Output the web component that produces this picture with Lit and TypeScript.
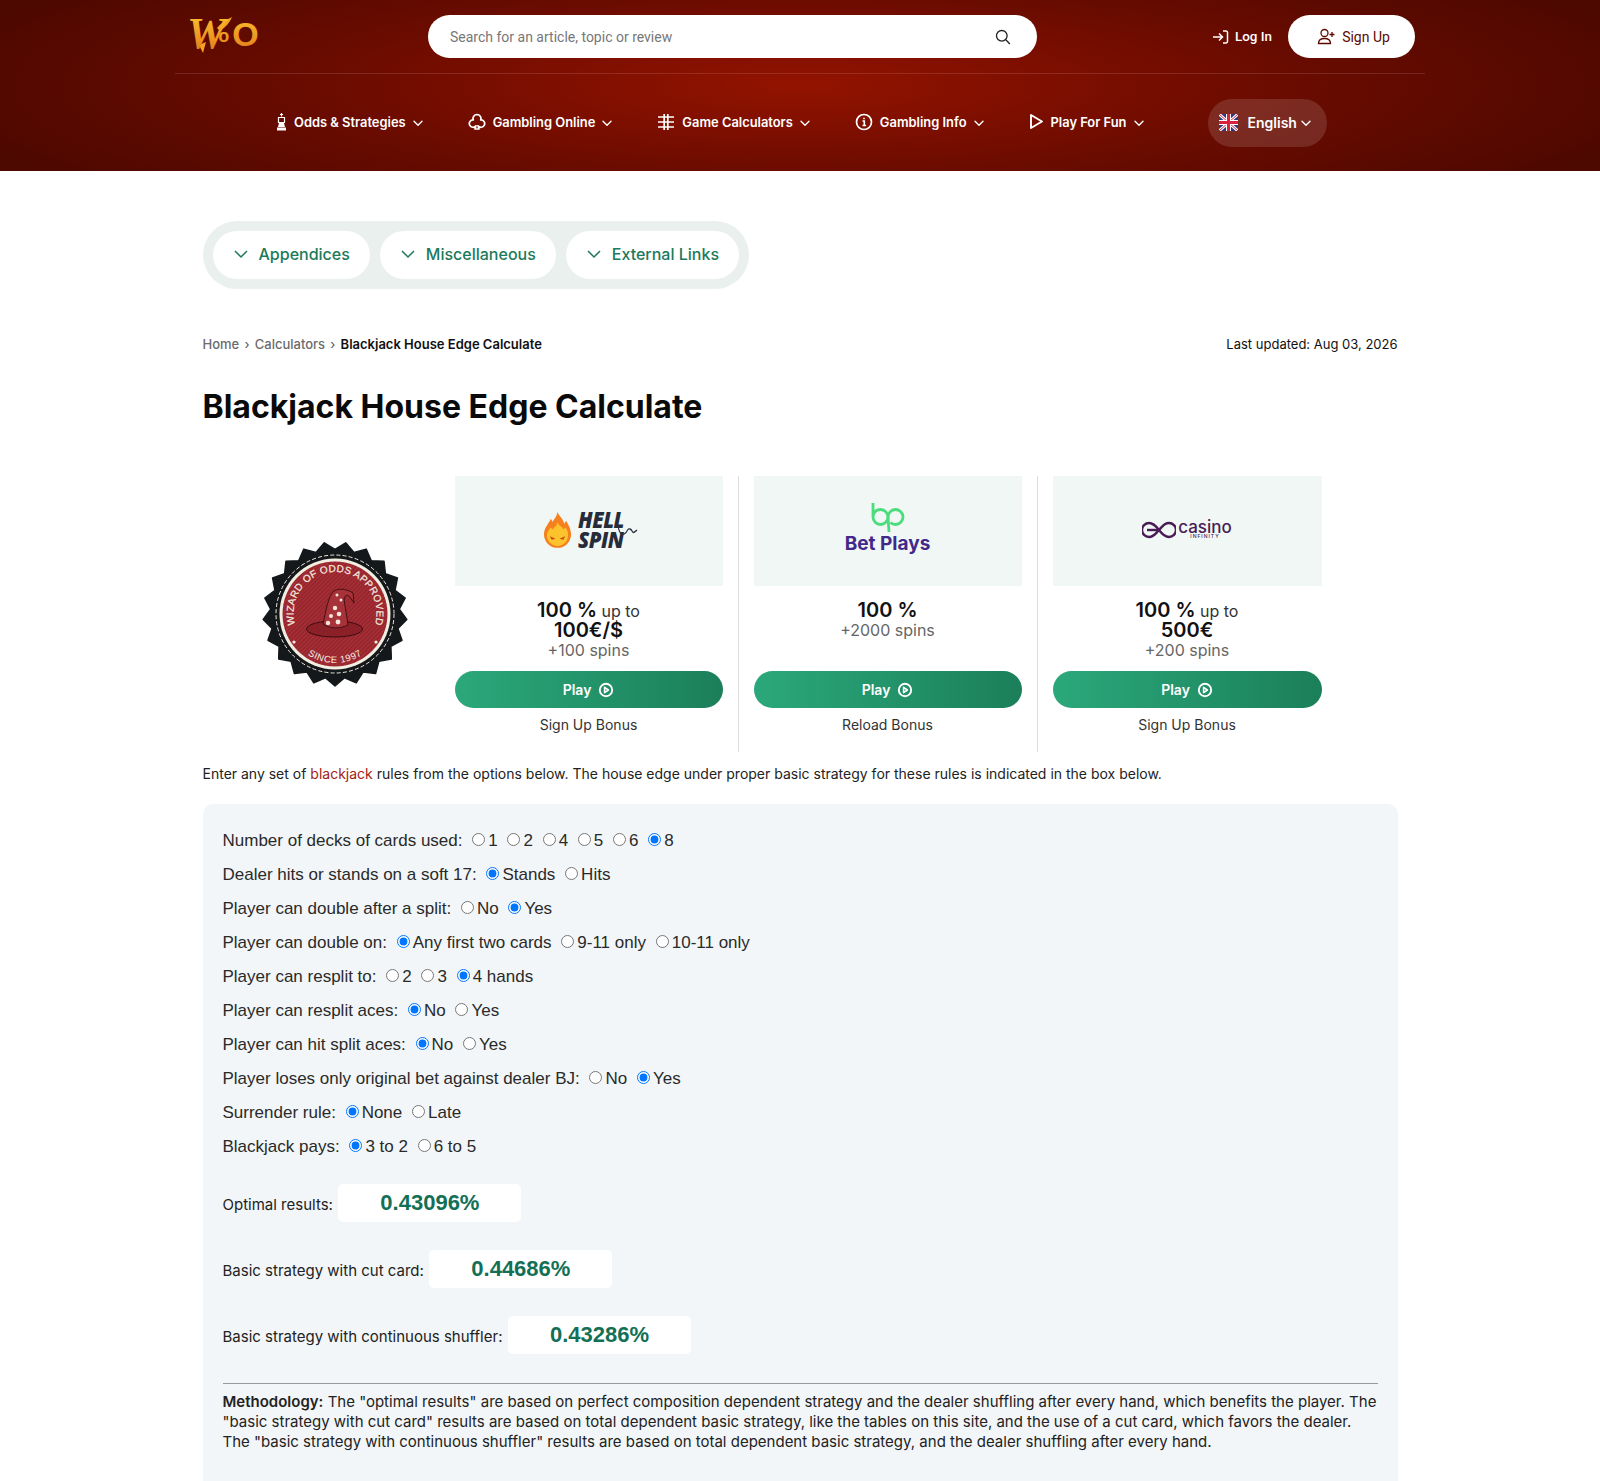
import { LitElement, html, css } from "lit";
import { customElement } from "lit/decorators.js";

const chev = html`<svg class="chev" viewBox="0 0 12 12" width="12" height="12"><path d="M2 4.2 6 8.2l4-4" fill="none" stroke="currentColor" stroke-width="1.4" stroke-linecap="round" stroke-linejoin="round"/></svg>`;
const playIcon = html`<svg viewBox="0 0 16 16" width="16" height="16"><circle cx="8" cy="8" r="6.2" fill="none" stroke="#fff" stroke-width="1.9"/><path d="M6.600 5.400 10.400 8l-3.800 2.600z" fill="none" stroke="#fff" stroke-width="1.600" stroke-linejoin="round"/></svg>`;

function burst() {
  const pts: string[] = [];
  const n = 21;
  for (let i = 0; i < n * 2; i++) {
    const r = i % 2 ? 64.5 : 72;
    const a = (Math.PI * i) / n - Math.PI / 2 + Math.PI / n;
    pts.push(`${(75 + r * Math.cos(a)).toFixed(1)},${(75 + r * Math.sin(a)).toFixed(1)}`);
  }
  return pts.join(" ");
}

const badge = html`<svg class="badge" viewBox="0 0 150 150" width="150" height="150">
  <defs>
    <path id="arcTop" d="M36.500 90A41.500 41.500 0 1 1 113.500 90"/>
    <path id="arcBot" d="M37 106A49 49 0 0 0 113 106"/>
    <pattern id="hatch" width="3" height="3" patternUnits="userSpaceOnUse" patternTransform="rotate(45)"><rect width="3" height="3" fill="#a52e36"/><rect width="1" height="3" fill="#8f2229"/></pattern>
  </defs>
  <polygon points="${burst()}" fill="#14181a" stroke="#14181a" stroke-width="1.500" stroke-linejoin="round"/>
  <circle cx="75" cy="75" r="59" fill="none" stroke="#efe9dc" stroke-width="1" stroke-dasharray="4 2.200"/>
  <circle cx="75" cy="75" r="55.500" fill="#f3eee2"/>
  <circle cx="75" cy="75" r="52.500" fill="url(#hatch)"/>
  <text font-family="'Liberation Sans',sans-serif" font-size="10" fill="#f5eee0" stroke="#f5eee0" stroke-width=".2" letter-spacing=".3"><textPath href="#arcTop" startOffset="50%" text-anchor="middle">WIZARD OF ODDS APPROVED</textPath></text>
  <text font-family="'Liberation Sans',sans-serif" font-size="9.400" fill="#f5eee0" letter-spacing=".6" text-anchor="middle"><textPath href="#arcBot" startOffset="50%">SINCE 1997</textPath></text>
  <circle cx="34" cy="103" r="1.600" fill="#f5eee0"/><circle cx="116" cy="103" r="1.600" fill="#f5eee0"/>
  <ellipse cx="74.500" cy="90" rx="28" ry="8" fill="#8b2028" stroke="#3a0c10" stroke-width="1"/>
  <path d="M63 85C66 72 68 57 74 52 79 49 87 50 93 54L94 64 90 58C88 56 85 55 84 60 85 68 87 78 88 86 80 90 70 90 63 85z" fill="#a8323a" stroke="#3a0c10" stroke-width=".9"/>
  <g fill="#f3e6dc"><circle cx="77" cy="56" r="1.500"/><circle cx="81" cy="61" r="1.500"/><circle cx="75" cy="69" r="2.200"/><circle cx="71" cy="77" r="2"/><circle cx="79" cy="75" r="2.300"/><circle cx="68" cy="84" r="2.200"/><circle cx="78" cy="83" r="2.400"/></g>
</svg>`;

const flame = html`<svg viewBox="0 0 30 38" width="29" height="37"><path d="M15 1c-1 5-3 7-5 10-1-1-1-2-2-3-1 4-7 9-7 16a14 14 0 0 0 28 0c0-6-3-10-5-14l-2 3c-1-5-5-7-7-12z" fill="#f4801f"/><path d="M15 11c0 4-3 5-5 8l-2-2c-2 3-4 5-4 8a11 11 0 0 0 22 0c0-3-1-6-3-8l-2 2c-1-3-5-4-6-8z" fill="#fdc32d"/><path d="M7 26l6 2.500-4 1zM23 26l-6 2.500 4 1z" fill="#c9470f"/></svg>`;

const hell = html`<div class="hell">${flame}<div class="hellt"><span>HELL</span><span>SPIN</span><svg class="tail" viewBox="0 0 20 12" width="20" height="12"><path d="M0 3c2 7 4 8 7 6s2-5 5-4 2 4 4 3l3-2" fill="none" stroke="#2a3040" stroke-width="1.200"/></svg></div></div>`;
const bet = html`<div class="bet"><svg viewBox="0 0 36 31" width="36" height="31"><path d="M3 1v14a7.500 7.500 0 1 0 7.500-7.500C5 7.500 3 12 3 15" fill="none" stroke="#4bdd7d" stroke-width="2.800"/><path d="M19 30 18 15A7.500 7.500 0 1 1 25.500 22.500c-2 0-3.500-.5-5-2" fill="none" stroke="#4bdd7d" stroke-width="2.800"/></svg><span>Bet Plays</span></div>`;
const inf = html`<div class="inf"><svg viewBox="0 0 34 18" width="34" height="18"><path d="M17 9c-3-4-6-7-10-7a7 7 0 0 0 0 14c5 0 7-4 10-7s5-7 10-7a7 7 0 0 1 0 14c-4 0-7-3-10-7" fill="none" stroke="#4a1c55" stroke-width="2.400"/><path d="M5 9h12" stroke="#4a1c55" stroke-width="2.400"/></svg><div class="inft"><span>casino</span><small>INFINITY</small></div></div>`;

@customElement("app-root")
export class AppRoot extends LitElement {
  static styles = css`
    :host { display: block; font-family: Inter, "Liberation Sans", sans-serif; color: #111; background: #fff; height: 1481px; overflow: hidden; }
    * { box-sizing: border-box; }
    a { color: inherit; text-decoration: none; }
    header { height: 171px; background: radial-gradient(ellipse 55% 95% at 50% 50%, #931300 0%, #6e0c00 50%, #4d0800 100%); }
    .top { width: 1250px; margin: 0 auto; height: 74px; border-bottom: 1px solid rgba(255,255,255,.12); display: flex; align-items: flex-start; padding-top: 15px; }
    .logo { width: 253px; height: 44px; margin-top: -2px; padding-left: 11px; }
    .logo svg { overflow: visible; }
    .search { width: 609px; height: 43px; border-radius: 22px; background: #fff; display: flex; align-items: center; justify-content: space-between; padding: 0 26px 0 22px; font: 14px Roboto, sans-serif; color: #777; }
    .auth { flex: 1; display: flex; justify-content: flex-end; align-items: center; gap: 16px; padding-right: 10px; height: 43px; }
    .login { display: flex; align-items: center; gap: 6px; color: #fff; font: 500 13.4px Roboto, sans-serif; }
    .signup { width: 127px; height: 43px; border-radius: 22px; background: #fff; color: #5d0a00; font: 400 14px Roboto, sans-serif; display: flex; align-items: center; justify-content: center; gap: 6px; padding-left: 4px; }
    nav { height: 97px; width: 1250px; margin: 0 auto; display: flex; align-items: center; padding-left: 101px; }
    .ni { display: flex; align-items: center; color: #fff; font-size: 12.9px; font-weight: 600; margin-right: 44px; padding-bottom: 1px; }
    .ni svg.ic { margin-right: 7px; }
    .ni .chev { margin-left: 6px; margin-top: 2px; }
    .lang { width: 119px; height: 48px; border-radius: 24px; background: rgba(255,255,255,.13); display: flex; align-items: center; color: #fff; font-size: 14px; font-weight: 600; padding-left: 11px; margin-left: 19px; }
    .lang .chev { margin-left: 3px; }
    .lang span { margin: 0 0 0 10px; }
    main { width: 1195px; margin: 0 auto; }
    .pills { margin-top: 50px; width: 546px; height: 68px; border-radius: 34px; background: #e9f0ee; padding: 10px; display: flex; gap: 10px; }
    .pill { height: 48px; border-radius: 24px; background: #fff; padding: 0 20px 2px; display: flex; align-items: center; gap: 10px; color: #1c7a5b; font-size: 16px; font-weight: 500; white-space: nowrap; flex: none; }
    .crumb { display: flex; justify-content: space-between; font-size: 13px; margin-top: 46px; line-height: 18px; }
    .crumb .g { color: #6b6b6b; font-weight: 500; }
    .crumb b { font-weight: 600; }
    .crumb i { font-style: normal; color: #555; margin: 0 5.25px; }
    h1 { font-size: 32px; line-height: 40px; font-weight: 700; margin: 34px 0 0; color: #0a0a0a; }
    .offers { display: flex; margin-top: 49px; height: 276px; }
    .seal { width: 237px; padding-left: 28px; display: flex; align-items: center; justify-content: center; }
    .card { width: 299px; padding: 0 15px; border-right: 1px solid #ddd; text-align: center; }
    .card:last-child { border-right: 0; }
    .img { height: 110px; background: #f0f7f4; display: flex; align-items: center; justify-content: center; }
    .txt { height: 85px; padding-top: 15px; font-size: 16px; line-height: 20px; color: #333; }
    .txt b { font-size: 20px; line-height: 16px; font-weight: 600; color: #111; }
    .txt .s { color: #666; display: block; margin-top: -1px; }
    .play { height: 37px; border-radius: 19px; background: linear-gradient(90deg, #2ba87b, #1b7f5a); display: flex; align-items: center; justify-content: center; gap: 7px; color: #fff; font-size: 14px; font-weight: 600; }
    .lab { font-size: 14px; line-height: 18px; margin-top: 8px; color: #333; }
    .hell { display: flex; align-items: center; gap: 6px; margin: -4px 10px 0 0; }
    .hellt { position: relative; display: flex; flex-direction: column; font: italic 800 20.5px/18px "Open Sans", sans-serif; color: #262c3a; text-align: left; letter-spacing: -.5px; transform: scaleY(1.12); }
    .tail { position: absolute; left: 40px; top: 13px; }
    .bet { display: flex; flex-direction: column; align-items: center; color: #42288a; font-size: 19px; font-weight: 700; line-height: 22px; margin-top: -6px; gap: 0; }
    .inf { display: flex; align-items: center; gap: 2px; margin-top: -3px; }
    .inft { display: flex; flex-direction: column; align-items: center; color: #4a1c55; font: 500 17px/14px Inter, sans-serif; }
    .inft small { font-size: 5px; line-height: 5px; letter-spacing: 1px; }
    .intro { font-size: 14px; line-height: 20px; margin: 12px 0 0; color: #222; }
    .intro a { color: #a32315; }
    .box { margin-top: 20px; background: #f2f6f8; border-radius: 10px; padding: 20px; height: 700px; }
    .row { font: 17px/34px "Liberation Sans", Arial, sans-serif; height: 34px; color: #2a2a2a; white-space: nowrap; }
    .results { margin-top: 21px; }
    .res { display: flex; align-items: center; gap: 5.5px; font-size: 15px; color: #222; height: 38px; margin-bottom: 28px; }
    .res span { padding-top: 1px; }
    .val { width: 183px; height: 38px; background: #fff; border-radius: 5px; text-align: center; font: 700 22px/38px "Liberation Sans", Arial, sans-serif; color: #136f55; margin-top: -3px; }
    hr { border: 0; border-top: 1px solid #999; margin: 0; }
    .meth { font-size: 15px; line-height: 20px; margin: 8px 0 0; color: #222; }
    .meth b { font-weight: 600; }
  `;

  radio(name: string, label: string, checked = false) {
    return html`<input type="radio" name=${name} ?checked=${checked} />${label} `;
  }

  row(name: string, text: string, opts: [string, boolean?][]) {
    return html`<div class="row">${text} ${opts.map(([l, c]) => this.radio(name, l, !!c))}</div>`;
  }

  card(logo: unknown, body: unknown, label: string) {
    return html`<div class="card"><div class="img">${logo}</div><div class="txt">${body}</div><a class="play" href="#">Play ${playIcon}</a><div class="lab">${label}</div></div>`;
  }

  render() {
    return html`
      <header>
        <div class="top">
          <div class="logo"><svg width="80" height="44" viewBox="0 0 80 44"><defs><linearGradient id="lg" x1="0" y1="0" x2="0" y2="1"><stop offset="0" stop-color="#ffcb2e"/><stop offset="1" stop-color="#e0701a"/></linearGradient></defs><path d="M31 15C35 10 40 7 46 4 44 9 40 14 34 18zM13 32l4 8 3-11z" fill="#f7a322"/><text x="1" y="35" font-family="'Liberation Serif',serif" font-weight="700" font-style="italic" font-size="44" fill="url(#lg)">W<tspan font-family="'Liberation Sans',sans-serif" font-style="normal" font-size="18" dx="-8" dy="-6">o</tspan><tspan font-family="'Liberation Sans',sans-serif" font-style="normal" font-size="34" dx="3" dy="4">O</tspan></text></svg></div>
          <div class="search"><span>Search for an article, topic or review</span><svg width="16" height="16" viewBox="0 0 16 16"><circle cx="6.800" cy="6.800" r="5.300" fill="none" stroke="#222" stroke-width="1.300"/><path d="m10.800 10.800 4 4.200" stroke="#222" stroke-width="1.300"/></svg></div>
          <div class="auth">
            <a class="login" href="#"><svg width="17" height="16" viewBox="0 0 17 16"><path d="M1 8h9M7 4.500 10.500 8 7 11.500M11 2h3a1.500 1.500 0 0 1 1.500 1.500v9A1.500 1.500 0 0 1 14 14h-3" fill="none" stroke="#fff" stroke-width="1.500"/></svg>Log In</a>
            <a class="signup" href="#"><svg width="19" height="17" viewBox="0 0 19 17"><circle cx="7.500" cy="5" r="3.500" fill="none" stroke="#5d0a00" stroke-width="1.300"/><path d="M1.500 15.500c0-3 2-5 6-5s6 2 6 5zM15 4v5M12.500 6.500h5" fill="none" stroke="#5d0a00" stroke-width="1.300"/></svg>Sign Up</a>
          </div>
        </div>
        <nav>
          <a class="ni" href="#"><svg class="ic" width="11" height="18" viewBox="0 0 11 18"><path d="M5.500 0v3.500M4 1.500h3" stroke="#fff" stroke-width="1.200"/><path d="M2.500 4.500h6v5h-6z" fill="none" stroke="#fff" stroke-width="1.200"/><path d="M3 10h5l1 4H2z" fill="#fff"/><path d="M1 14.500h9v3H1z" fill="#fff"/></svg>Odds &amp; Strategies${chev}</a>
          <a class="ni" href="#"><svg class="ic" width="18" height="18" viewBox="0 0 18 18"><path d="M9 1.500a4 4 0 0 1 3.700 5.400A3.700 3.700 0 1 1 10 12.800L11 16H7l1-3.200a3.700 3.700 0 1 1-2.700-5.900A4 4 0 0 1 9 1.500z" fill="none" stroke="#fff" stroke-width="1.700" stroke-linejoin="round"/></svg>Gambling Online${chev}</a>
          <a class="ni" href="#"><svg class="ic" width="18" height="18" viewBox="0 0 18 18"><path d="M7.200 1v16M10.800 1v16M1 4h16M1 9h16M1 14h16" stroke="#fff" stroke-width="1.700" fill="none"/></svg>Game Calculators${chev}</a>
          <a class="ni" href="#"><svg class="ic" width="18" height="18" viewBox="0 0 18 18"><circle cx="9" cy="9" r="7.500" fill="none" stroke="#fff" stroke-width="1.700"/><path d="M7.500 8H9.300v4.500M7.500 12.500h3.600M9 4.800v1.400" fill="none" stroke="#fff" stroke-width="1.600"/></svg>Gambling Info${chev}</a>
          <a class="ni" href="#"><svg class="ic" width="15" height="18" viewBox="0 0 15 18"><path d="M2 2v13L13 8.500z" fill="none" stroke="#fff" stroke-width="1.900" stroke-linejoin="round"/></svg>Play For Fun${chev}</a>
          <div class="lang"><svg width="19" height="17" viewBox="0 0 19 17"><rect width="19" height="17" rx="3" fill="#2b3a80"/><path d="M0 0l19 17M19 0 0 17" stroke="#fff" stroke-width="3"/><path d="M0 0l19 17M19 0 0 17" stroke="#d8203f" stroke-width="1"/><path d="M9.500 0v17M0 8.500h19" stroke="#fff" stroke-width="5"/><path d="M9.500 0v17M0 8.500h19" stroke="#d8203f" stroke-width="3"/></svg><span>English</span>${chev}</div>
        </nav>
      </header>
      <main>
        <div class="pills">
          ${["Appendices", "Miscellaneous", "External Links"].map((p) => html`<a class="pill" href="#"><svg width="16" height="16" viewBox="0 0 16 16"><path d="M2 5l6 6 6-6" fill="none" stroke="#1c7a5b" stroke-width="1.500"/></svg>${p}</a>`)}
        </div>
        <div class="crumb"><div><a class="g" href="#">Home</a><i>›</i><a class="g" href="#">Calculators</a><i>›</i><b>Blackjack House Edge Calculate</b></div><div>Last updated: Aug 03, 2026</div></div>
        <h1>Blackjack House Edge Calculate</h1>
        <div class="offers">
          <div class="seal">${badge}</div>
          ${this.card(hell, html`<b>100 %</b> up to<br /><b>100€/$</b><span class="s">+100 spins</span>`, "Sign Up Bonus")}
          ${this.card(bet, html`<b>100 %</b><span class="s">+2000 spins</span>`, "Reload Bonus")}
          ${this.card(inf, html`<b>100 %</b> up to<br /><b>500€</b><span class="s">+200 spins</span>`, "Sign Up Bonus")}
        </div>
        <p class="intro">Enter any set of <a href="#">blackjack</a> rules from the options below. The house edge under proper basic strategy for these rules is indicated in the box below.</p>
        <div class="box">
          ${this.row("d", "Number of decks of cards used:", [["1"], ["2"], ["4"], ["5"], ["6"], ["8", true]])}
          ${this.row("s", "Dealer hits or stands on a soft 17:", [["Stands", true], ["Hits"]])}
          ${this.row("das", "Player can double after a split:", [["No"], ["Yes", true]])}
          ${this.row("dbl", "Player can double on:", [["Any first two cards", true], ["9-11 only"], ["10-11 only"]])}
          ${this.row("rs", "Player can resplit to:", [["2"], ["3"], ["4 hands", true]])}
          ${this.row("ra", "Player can resplit aces:", [["No", true], ["Yes"]])}
          ${this.row("ha", "Player can hit split aces:", [["No", true], ["Yes"]])}
          ${this.row("bj", "Player loses only original bet against dealer BJ:", [["No"], ["Yes", true]])}
          ${this.row("su", "Surrender rule:", [["None", true], ["Late"]])}
          ${this.row("p", "Blackjack pays:", [["3 to 2", true], ["6 to 5"]])}
          <div class="results">
            <div class="res"><span>Optimal results:</span><div class="val">0.43096%</div></div>
            <div class="res"><span>Basic strategy with cut card:</span><div class="val">0.44686%</div></div>
            <div class="res"><span>Basic strategy with continuous shuffler:</span><div class="val">0.43286%</div></div>
          </div>
          <hr />
          <p class="meth"><b>Methodology:</b> The "optimal results" are based on perfect composition dependent strategy and the dealer shuffling after every hand, which benefits the player. The "basic strategy with cut card" results are based on total dependent basic strategy, like the tables on this site, and the use of a cut card, which favors the dealer. The "basic strategy with continuous shuffler" results are based on total dependent basic strategy, and the dealer shuffling after every hand.</p>
        </div>
      </main>
    `;
  }
}
